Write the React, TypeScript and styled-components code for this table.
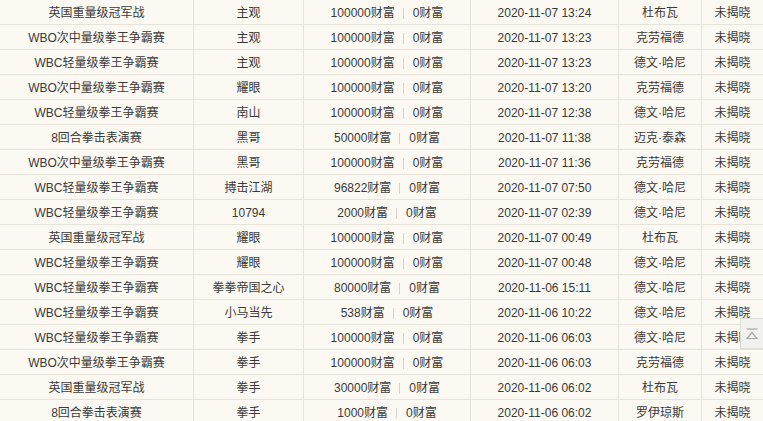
import React from "react";
import styled, { createGlobalStyle } from "styled-components";

const Global = createGlobalStyle`
  html, body { margin: 0; padding: 0; background: #fbf9f1; overflow: hidden; }
  body { font-family: "Liberation Sans", "Noto Sans CJK SC", sans-serif; font-size: 12px; color: #3a3a3a; }
`;

type Row = [string, string, string, string, string, string];

const rows: Row[] = [
  ["英国重量级冠军战", "主观", "100000", "0", "2020-11-07 13:24", "杜布瓦"],
  ["WBO次中量级拳王争霸赛", "主观", "100000", "0", "2020-11-07 13:23", "克劳福德"],
  ["WBC轻量级拳王争霸赛", "主观", "100000", "0", "2020-11-07 13:23", "德文·哈尼"],
  ["WBO次中量级拳王争霸赛", "耀眼", "100000", "0", "2020-11-07 13:20", "克劳福德"],
  ["WBC轻量级拳王争霸赛", "南山", "100000", "0", "2020-11-07 12:38", "德文·哈尼"],
  ["8回合拳击表演赛", "黑哥", "50000", "0", "2020-11-07 11:38", "迈克·泰森"],
  ["WBO次中量级拳王争霸赛", "黑哥", "100000", "0", "2020-11-07 11:36", "克劳福德"],
  ["WBC轻量级拳王争霸赛", "搏击江湖", "96822", "0", "2020-11-07 07:50", "德文·哈尼"],
  ["WBC轻量级拳王争霸赛", "10794", "2000", "0", "2020-11-07 02:39", "德文·哈尼"],
  ["英国重量级冠军战", "耀眼", "100000", "0", "2020-11-07 00:49", "杜布瓦"],
  ["WBC轻量级拳王争霸赛", "耀眼", "100000", "0", "2020-11-07 00:48", "德文·哈尼"],
  ["WBC轻量级拳王争霸赛", "拳拳帝国之心", "80000", "0", "2020-11-06 15:11", "德文·哈尼"],
  ["WBC轻量级拳王争霸赛", "小马当先", "538", "0", "2020-11-06 10:22", "德文·哈尼"],
  ["WBC轻量级拳王争霸赛", "拳手", "100000", "0", "2020-11-06 06:03", "德文·哈尼"],
  ["WBO次中量级拳王争霸赛", "拳手", "100000", "0", "2020-11-06 06:03", "克劳福德"],
  ["英国重量级冠军战", "拳手", "30000", "0", "2020-11-06 06:02", "杜布瓦"],
  ["8回合拳击表演赛", "拳手", "1000", "0", "2020-11-06 06:02", "罗伊琼斯"],
];

const Table = styled.div`
  width: 763px;
  display: flex;
  flex-direction: column;
`;

const RowEl = styled.div`
  display: grid;
  grid-template-columns: 194px 110px 167px 148px 83px 1fr;
  height: 25px;
  box-sizing: border-box;
  border-bottom: 1px solid #e6e4d8;
`;

const Cell = styled.div<{ $last?: boolean }>`
  display: flex;
  align-items: center;
  justify-content: center;
  box-sizing: border-box;
  border-right: ${(p) => (p.$last ? "none" : "1px solid #e6e4d8")};
  white-space: nowrap;
  line-height: 24px;
  padding-top: 1px;
`;

const Sep = styled.span`
  display: inline-block;
  width: 1px;
  height: 11px;
  background: #d4d4cc;
  margin: 0 9px 0 8px;
`;

const TopButton = styled.div`
  position: fixed;
  right: -2px;
  top: 318px;
  width: 25px;
  height: 31px;
  box-sizing: border-box;
  background: #f1f1f0;
  border: 1px solid #dcdcd8;
  display: flex;
  align-items: center;
  justify-content: center;
  padding-right: 2px;
`;

export default function App() {
  return (
    <>
      <Global />
      <Table>
        {rows.map((r, i) => (
          <RowEl key={i}>
            <Cell>{r[0]}</Cell>
            <Cell>{r[1]}</Cell>
            <Cell>
              {r[2]}财富
              <Sep />
              {r[3]}财富
            </Cell>
            <Cell>{r[4]}</Cell>
            <Cell>{r[5]}</Cell>
            <Cell $last>未揭晓</Cell>
          </RowEl>
        ))}
      </Table>
      <TopButton>
        <svg width="12" height="12" viewBox="0 0 12 12" fill="none" stroke="#a8a8a4" strokeWidth="1.2">
          <line x1="0.5" y1="1" x2="11.5" y2="1" />
          <path d="M1 10.5 L6 4.5 L11 10.5 Z" />
        </svg>
      </TopButton>
    </>
  );
}
